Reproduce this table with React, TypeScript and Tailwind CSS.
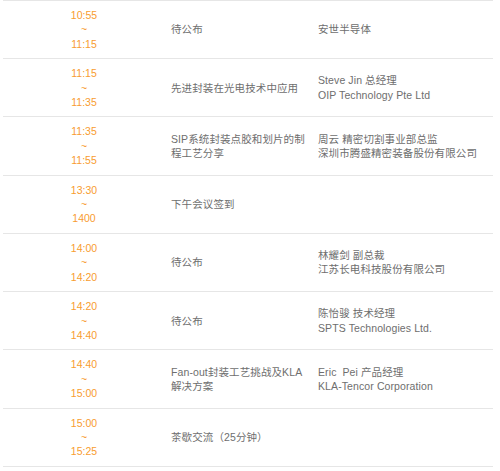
import React from "react";

type Row = { start: string; end: string; topic: string; speaker?: string[] };

const rows: Row[] = [
  { start: "10:55", end: "11:15", topic: "待公布", speaker: ["安世半导体"] },
  { start: "11:15", end: "11:35", topic: "先进封装在光电技术中应用", speaker: ["Steve Jin 总经理", "OIP Technology Pte Ltd"] },
  { start: "11:35", end: "11:55", topic: "SIP系统封装点胶和划片的制程工艺分享", speaker: ["周云 精密切割事业部总监", "深圳市腾盛精密装备股份有限公司"] },
  { start: "13:30", end: "1400", topic: "下午会议签到" },
  { start: "14:00", end: "14:20", topic: "待公布", speaker: ["林耀剑 副总裁", "江苏长电科技股份有限公司"] },
  { start: "14:20", end: "14:40", topic: "待公布", speaker: ["陈怡骏 技术经理", "SPTS Technologies Ltd."] },
  { start: "14:40", end: "15:00", topic: "Fan-out封装工艺挑战及KLA解决方案", speaker: ["Eric\u00a0 Pei 产品经理", "KLA-Tencor Corporation"] },
  { start: "15:00", end: "15:25", topic: "茶歇交流（25分钟）" },
];

export default function App() {
  return (
    <div
      className="w-[500px] h-[471px] bg-white overflow-hidden pl-[3px] pr-[7px]"
      style={{ fontFamily: '"Liberation Sans", Arial, "Noto Sans CJK SC", sans-serif' }}
    >
      <div className="border-t border-[#e6e6e6] text-[10.5px] leading-[14.4px] text-[#6e6e6e] tracking-[0.1px]">
        {rows.map((r, i) => (
          <div key={i} className="grid grid-cols-[162px_147px_1fr] border-b border-[#e6e6e6] py-[7px]">
            <div className="flex flex-col items-center justify-center text-[#f89c30] tracking-normal">
              <span>{r.start}</span>
              <span>~</span>
              <span>{r.end}</span>
            </div>
            <div className="flex items-center px-[6px]">
              <span>{r.topic}</span>
            </div>
            <div className="flex flex-col justify-center px-[6px]">
              {r.speaker?.map((s, j) => (
                <span key={j}>{s}</span>
              ))}
            </div>
          </div>
        ))}
      </div>
    </div>
  );
}
